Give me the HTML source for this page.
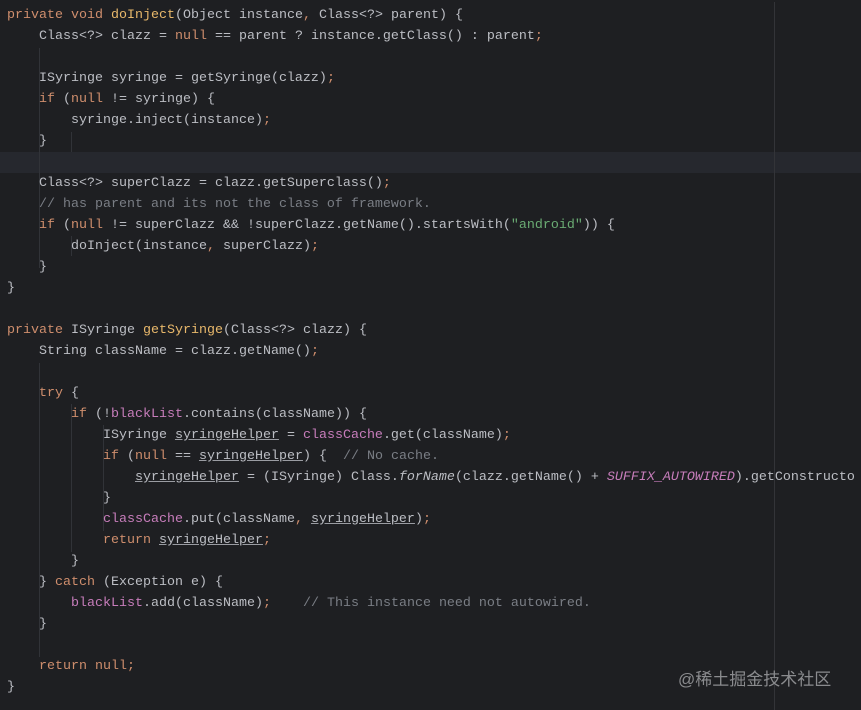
<!DOCTYPE html>
<html><head><meta charset="utf-8"><style>
html,body{margin:0;padding:0;background:#1e1f22;}
body{width:861px;height:710px;position:relative;overflow:hidden;font-family:"Liberation Mono",monospace;font-size:13.33px;color:#bcbec4;}
#w{position:absolute;left:0;top:2px;width:861px;height:708px;overflow:hidden;}
.l{position:absolute;left:7px;height:21px;line-height:21px;white-space:pre;}
.k{color:#cf8e6d}.m{color:#e8b86b}.s{color:#6aab73}.c{color:#7a7e85}.f{color:#c77dbb}.i{font-style:italic}.u{text-decoration:underline;text-decoration-color:#9a9ca2}
.hl{position:absolute;left:0;width:861px;top:150px;height:21px;background:#26282e}
.g{position:absolute;width:1px;background:#313338}
.wm{position:absolute;left:678px;top:663px;font-family:"Liberation Sans","Noto Sans CJK SC",sans-serif;font-size:17px;color:#8a8b8e;}
.rm{position:absolute;left:774px;top:-2px;width:1px;height:710px;background:#333438}
</style></head><body><div id="w">
<div class="hl"></div>
<div class="rm"></div>
<div class="g" style="left:39px;top:46px;height:220px"></div>
<div class="g" style="left:39px;top:361px;height:294px"></div>
<div class="g" style="left:71px;top:402px;height:148px"></div>
<div class="g" style="left:103px;top:423px;height:106px"></div>
<div class="g" style="left:71px;top:130px;height:20px"></div>
<div class="g" style="left:71px;top:234px;height:20px"></div>
<div class="l" style="top:3px"><span class="k">private void </span><span class="m">doInject</span>(Object instance<span class="k">, </span>Class&lt;?&gt; parent) {</div>
<div class="l" style="top:24px">    Class&lt;?&gt; clazz = <span class="k">null</span> == parent ? instance.getClass() : parent<span class="k">;</span></div>
<div class="l" style="top:66px">    ISyringe syringe = getSyringe(clazz)<span class="k">;</span></div>
<div class="l" style="top:87px">    <span class="k">if </span>(<span class="k">null</span> != syringe) {</div>
<div class="l" style="top:108px">        syringe.inject(instance)<span class="k">;</span></div>
<div class="l" style="top:129px">    }</div>
<div class="l" style="top:171px">    Class&lt;?&gt; superClazz = clazz.getSuperclass()<span class="k">;</span></div>
<div class="l" style="top:192px">    <span class="c">// has parent and its not the class of framework.</span></div>
<div class="l" style="top:213px">    <span class="k">if </span>(<span class="k">null</span> != superClazz &amp;&amp; !superClazz.getName().startsWith(<span class="s">"android"</span>)) {</div>
<div class="l" style="top:234px">        doInject(instance<span class="k">, </span>superClazz)<span class="k">;</span></div>
<div class="l" style="top:255px">    }</div>
<div class="l" style="top:276px">}</div>
<div class="l" style="top:318px"><span class="k">private </span>ISyringe <span class="m">getSyringe</span>(Class&lt;?&gt; clazz) {</div>
<div class="l" style="top:339px">    String className = clazz.getName()<span class="k">;</span></div>
<div class="l" style="top:381px">    <span class="k">try </span>{</div>
<div class="l" style="top:402px">        <span class="k">if </span>(!<span class="f">blackList</span>.contains(className)) {</div>
<div class="l" style="top:423px">            ISyringe <span class="u">syringeHelper</span> = <span class="f">classCache</span>.get(className)<span class="k">;</span></div>
<div class="l" style="top:444px">            <span class="k">if </span>(<span class="k">null</span> == <span class="u">syringeHelper</span>) {  <span class="c">// No cache.</span></div>
<div class="l" style="top:465px">                <span class="u">syringeHelper</span> = (ISyringe) Class.<span class="i">forName</span>(clazz.getName() + <span class="f i">SUFFIX_AUTOWIRED</span>).getConstructo</div>
<div class="l" style="top:486px">            }</div>
<div class="l" style="top:507px">            <span class="f">classCache</span>.put(className<span class="k">, </span><span class="u">syringeHelper</span>)<span class="k">;</span></div>
<div class="l" style="top:528px">            <span class="k">return </span><span class="u">syringeHelper</span><span class="k">;</span></div>
<div class="l" style="top:549px">        }</div>
<div class="l" style="top:570px">    } <span class="k">catch </span>(Exception e) {</div>
<div class="l" style="top:591px">        <span class="f">blackList</span>.add(className)<span class="k">;    </span><span class="c">// This instance need not autowired.</span></div>
<div class="l" style="top:612px">    }</div>
<div class="l" style="top:654px">    <span class="k">return null;</span></div>
<div class="l" style="top:675px">}</div>
<div class="wm">@稀土掘金技术社区</div>
</div></body></html>
